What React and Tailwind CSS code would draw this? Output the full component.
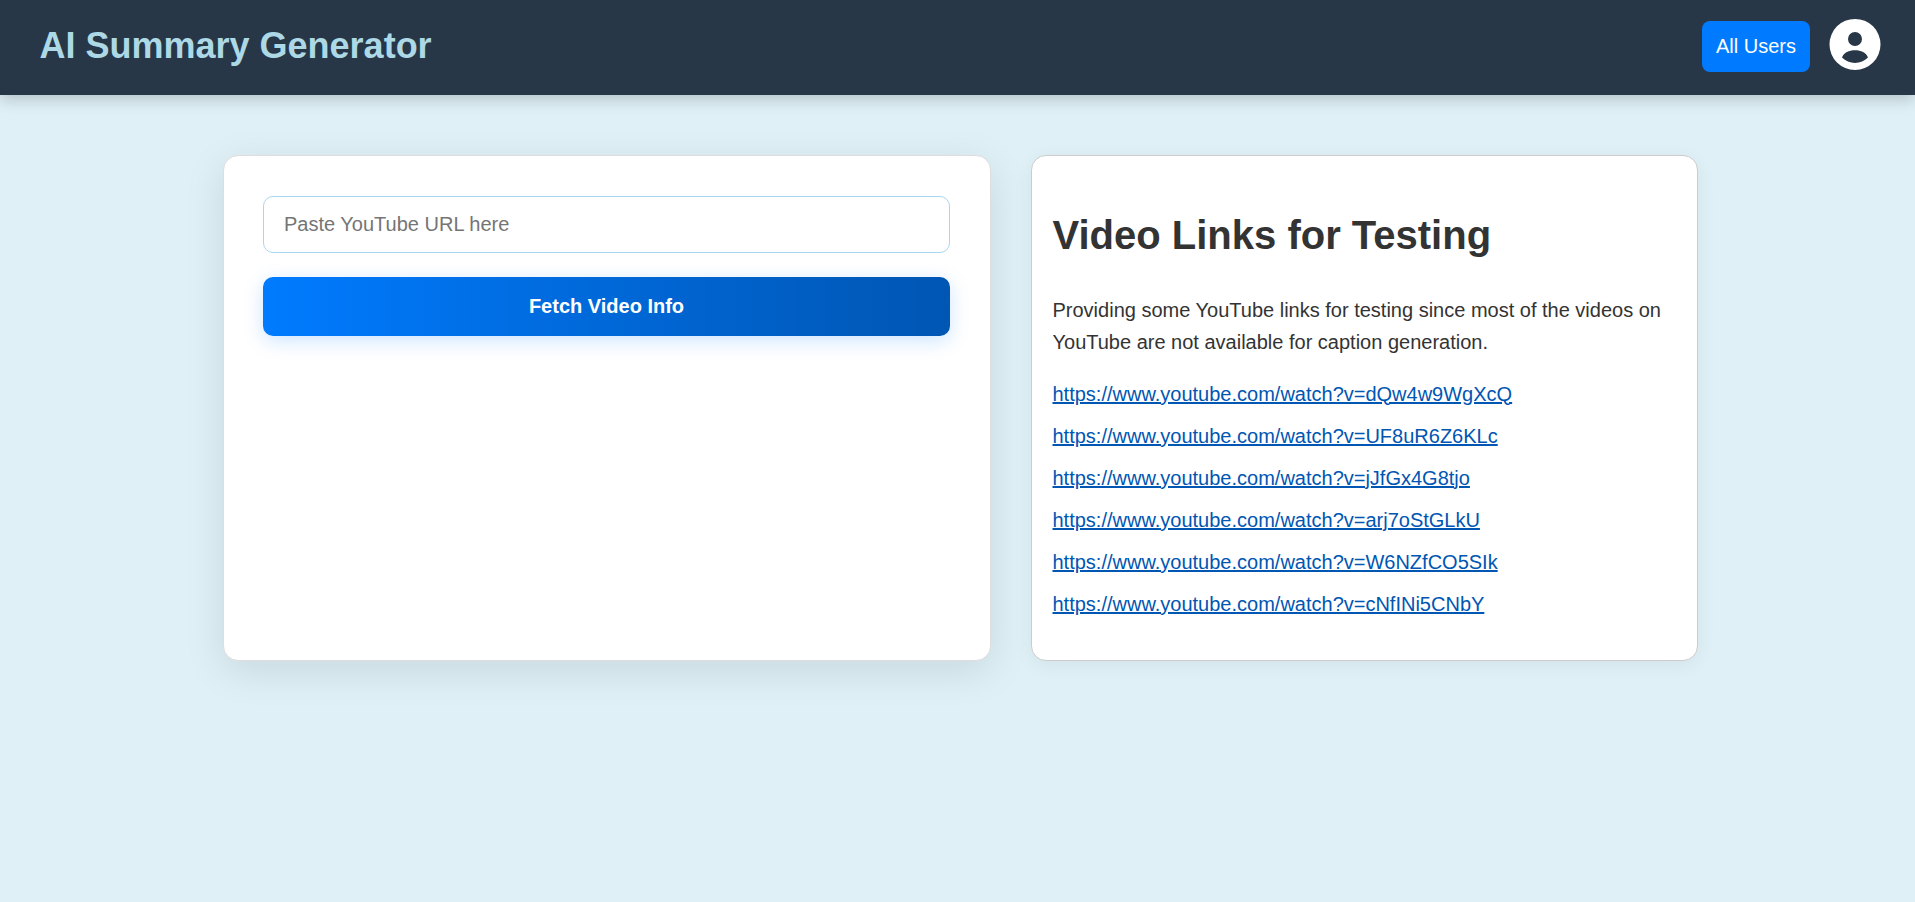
const links = [
  "https://www.youtube.com/watch?v=dQw4w9WgXcQ",
  "https://www.youtube.com/watch?v=UF8uR6Z6KLc",
  "https://www.youtube.com/watch?v=jJfGx4G8tjo",
  "https://www.youtube.com/watch?v=arj7oStGLkU",
  "https://www.youtube.com/watch?v=W6NZfCO5SIk",
  "https://www.youtube.com/watch?v=cNfINi5CNbY",
];

function ProfileIcon() {
  return (
    <svg viewBox="0 0 52 52" className="h-[52px] w-[52px]" aria-hidden="true">
      <path
        fill="#fff"
        fillRule="evenodd"
        d="M26 .9a25.500 25.500 0 1 1 0 51 25.500 25.500 0 0 1 0-51ZM26 14a7 7 0 1 0 0 14 7 7 0 0 0 0-14ZM13 39.600C14.800 34.400 20 32.200 26 32.200S37.200 34.400 39 39.600C35.500 43.200 31 45 26 45S16.500 43.200 13 39.600Z"
      />
    </svg>
  );
}

export default function App() {
  return (
    <div className="min-h-screen bg-[#dff0f7] font-['Liberation_Sans',Arial,sans-serif] text-xl leading-8 text-[#333]">
      <header className="flex h-[95px] items-start justify-between bg-[#283747] pl-[39.500px] pr-[34px] shadow-[0_4px_15px_rgba(0,0,0,0.2)]">
        <h1 className="mt-[17px] text-4xl leading-[58px] font-bold text-[#add8e6]">
          AI Summary Generator
        </h1>
        <div className="flex items-start gap-[19px]">
          <button className="mt-[21px] h-[51px] w-[108px] rounded-lg bg-[#007bff] pb-0.5 text-white">
            All Users
          </button>
          <div className="mt-[18px]">
            <ProfileIcon />
          </div>
        </div>
      </header>
      <main className="flex gap-10 pt-[60px] pl-[223px]">
        <section className="h-[506px] w-[768px] rounded-[15px] border border-[#ddd] bg-white pt-10 pr-10 pl-[39px] shadow-[0_10px_40px_rgba(0,0,0,0.1)]">
          <input
            type="text"
            placeholder="Paste YouTube URL here"
            className="block h-[57px] w-full rounded-[10px] border border-[#a8d8f0] px-5 placeholder:text-[#757575]"
          />
          <button className="mt-6 block h-[59px] w-full rounded-[10px] bg-linear-90 from-[#007bff] to-[#0056b3] pb-0.5 font-bold text-white shadow-[0_5px_20px_rgba(0,123,255,0.2)]">
            Fetch Video Info
          </button>
        </section>
        <section className="h-[506px] w-[667px] rounded-[15px] border border-[#ccc] bg-white p-5 pl-[20.500px] shadow-[0_4px_20px_rgba(0,0,0,0.06)]">
          <h2 className="my-[26.8px] text-[40px] leading-16 font-bold">
            Video Links for Testing
          </h2>
          <p className="mb-5">
            Providing some YouTube links for testing since most of the videos on
            YouTube are not available for caption generation.
          </p>
          <ul className="flex flex-col gap-2.5">
            {links.map((link) => (
              <li key={link}>
                <a href={link} className="text-[#0056b3] underline">
                  {link}
                </a>
              </li>
            ))}
          </ul>
        </section>
      </main>
    </div>
  );
}
